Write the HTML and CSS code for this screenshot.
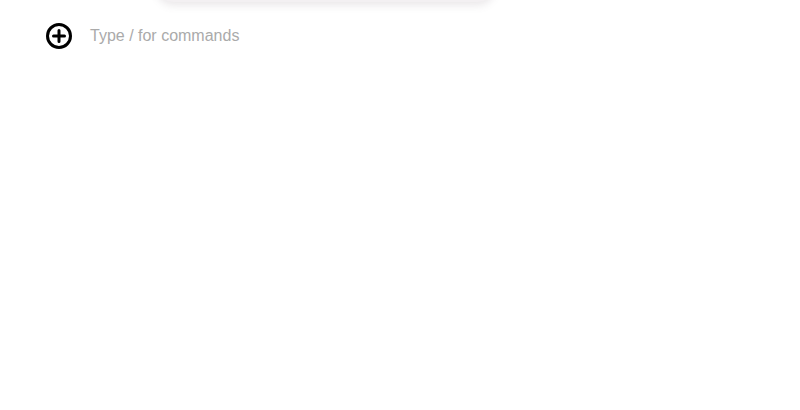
FILE: index.html
```html
<!DOCTYPE html>
<html>
<head>
<meta charset="utf-8">
<link rel="stylesheet" href="styles.css">
</head>
<body>
<div class="popover"></div>
<div class="editor">
  <div class="line">
    <button class="add" aria-label="Add block">
      <svg width="28" height="28" viewBox="0 0 28 28" fill="none" stroke="#000" stroke-width="3" stroke-linecap="round">
        <circle cx="14" cy="14" r="11.5"/>
        <path d="M14 8.5v11M8.5 14h11"/>
      </svg>
    </button>
    <span class="placeholder">Type / for commands</span>
  </div>
</div>
</body>
</html>
```
FILE: styles.css
```css
html, body {
  margin: 0;
  padding: 0;
  background: #fff;
  width: 800px;
  height: 410px;
  overflow: hidden;
  font-family: "Liberation Sans", Arial, sans-serif;
}
.popover {
  position: absolute;
  left: 157px;
  top: -40px;
  width: 337px;
  height: 42px;
  border-radius: 16px;
  background: #f3f0f2;
  box-shadow: 0 3px 8px rgba(120, 100, 110, 0.16);
}
.editor {
  padding: 22px 0 0 45px;
}
.line {
  display: flex;
  align-items: center;
  gap: 17px;
}
.add {
  width: 28px;
  height: 28px;
  padding: 0;
  border: 0;
  background: none;
  display: flex;
}
.placeholder {
  font-size: 16px;
  color: #aaaaaa;
  line-height: 28px;
}
```
